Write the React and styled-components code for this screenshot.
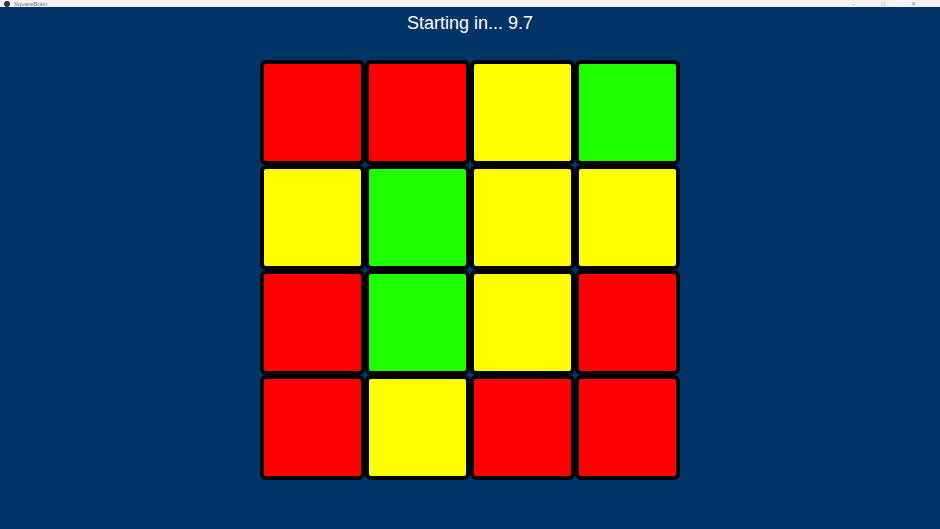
import React from "react";
import styled, { createGlobalStyle } from "styled-components";

const GlobalStyle = createGlobalStyle`
  html, body {
    margin: 0;
    padding: 0;
    background: #003466;
  }
  * {
    box-sizing: border-box;
  }
`;

const colors = {
  r: "#ff0000",
  y: "#ffff00",
  g: "#1eff00",
};

const board = [
  ["r", "r", "y", "g"],
  ["y", "g", "y", "y"],
  ["r", "g", "y", "r"],
  ["r", "y", "r", "r"],
];

const Window = styled.div`
  display: flex;
  flex-direction: column;
  width: 100%;
  height: 100vh;
  overflow: hidden;
  background: #003466;
  font-family: "Liberation Sans", Arial, sans-serif;
`;

const TitleBar = styled.div`
  height: 7px;
  flex-shrink: 0;
  background: #f7f1f7;
  display: flex;
  align-items: center;
  justify-content: space-between;
  padding: 0 4px;
  overflow: hidden;
`;

const AppName = styled.div`
  display: flex;
  align-items: center;
  gap: 4px;
  font-size: 6px;
  line-height: 6px;
  color: #777;

  i {
    display: block;
    width: 6px;
    height: 6px;
    border-radius: 50%;
    background: #333;
  }
`;

const Controls = styled.div`
  display: flex;
  gap: 26px;
  font-size: 6px;
  line-height: 6px;
  color: #888;
  padding-right: 20px;
`;

const Stage = styled.div`
  flex: 1;
  display: flex;
  flex-direction: column;
  align-items: center;
`;

const Countdown = styled.h1`
  margin: 0;
  padding-top: 6px;
  height: 53px;
  font-size: 18px;
  font-weight: normal;
  color: #ffffff;
`;

const Grid = styled.div`
  display: grid;
  grid-template-columns: repeat(4, 105px);
  grid-auto-rows: 105px;
`;

const Tile = styled.div`
  border: 4px solid #000;
  border-radius: 6px;
  background: ${(p) => colors[p.$c]};
`;

export default function App() {
  return (
    <Window>
      <GlobalStyle />
      <TitleBar>
        <AppName>
          <i />
          <span>SquareBrain</span>
        </AppName>
        <Controls>
          <span>–</span>
          <span>□</span>
          <span>✕</span>
        </Controls>
      </TitleBar>
      <Stage>
        <Countdown>Starting in... 9.7</Countdown>
        <Grid>
          {board.flat().map((c, i) => (
            <Tile key={i} $c={c} />
          ))}
        </Grid>
      </Stage>
    </Window>
  );
}
